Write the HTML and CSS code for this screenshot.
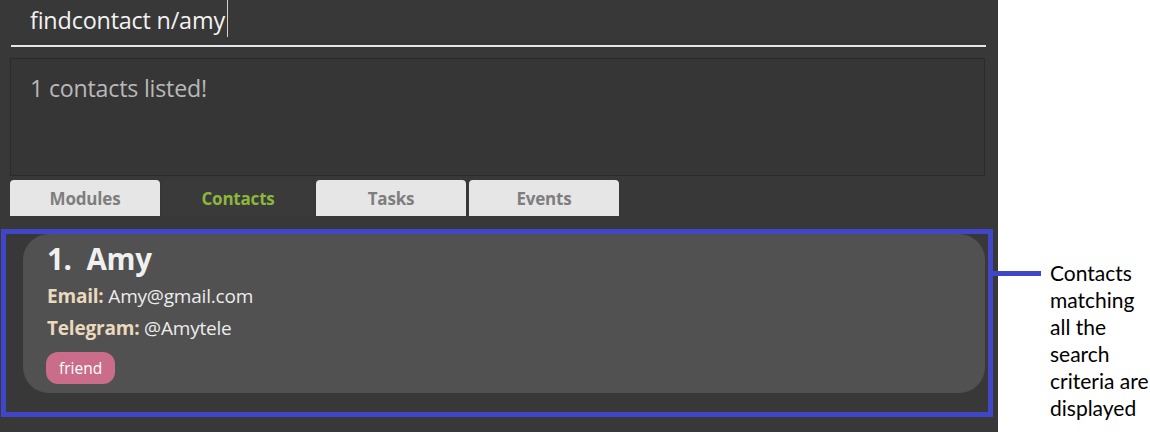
FILE: index.html
```html
<!DOCTYPE html>
<html lang="en">
<head>
<meta charset="utf-8">
<title>Find contact</title>
<link rel="stylesheet" href="styles.css">
</head>
<body>
<div class="app">
  <div class="command">
    <span class="command-text">findcontact n/amy</span><span class="caret"></span>
  </div>
  <div class="result">1 contacts listed!</div>
  <div class="tabs">
    <div class="tab">Modules</div>
    <div class="tab tab-active">Contacts</div>
    <div class="tab">Tasks</div>
    <div class="tab">Events</div>
  </div>
  <div class="highlight">
    <div class="card">
      <div class="card-title">1.&nbsp; Amy</div>
      <div class="fields">
        <div class="field"><span class="label">Email:</span> Amy@gmail.com</div>
        <div class="field"><span class="label">Telegram:</span> @Amytele</div>
      </div>
      <div class="tags"><span class="tag">friend</span></div>
    </div>
  </div>
</div>
<div class="note">
  <div class="note-line"></div>
  <div class="note-text">Contacts matching all the search criteria are displayed</div>
</div>
</body>
</html>
```
FILE: styles.css
```css
html, body {
  margin: 0;
  padding: 0;
  background: #ffffff;
}
body {
  display: flex;
  align-items: flex-start;
  width: 1150px;
  height: 432px;
  overflow: hidden;
  font-family: "Open Sans", "Noto Sans", sans-serif;
}
.app {
  width: 998px;
  height: 432px;
  flex: none;
  background: #383838;
  display: flex;
  flex-direction: column;
}
.command {
  height: 45px;
  margin: 0 12px 0 11px;
  border-bottom: 2px solid #e6e6e6;
  padding-left: 19px;
  display: flex;
  align-items: flex-start;
  box-sizing: content-box;
}
.command-text {
  font-size: 23.4px;
  line-height: 40px;
  color: #f2f2f2;
  letter-spacing: -0.2px;
}
.caret {
  width: 1px;
  height: 37px;
  background: #d0d0d0;
  margin-left: 2px;
}
.result {
  margin: 11px 0 0 10px;
  width: 954px;
  height: 116px;
  border: 1px solid #2b2b2b;
  background: #363636;
  padding: 0 0 0 19px;
  font-size: 23.2px;
  line-height: 59px;
  color: #b9b9b9;
  letter-spacing: -0.2px;
}
.tabs {
  display: flex;
  gap: 3px;
  margin: 4px 0 0 10px;
}
.tab {
  width: 150px;
  height: 36px;
  border-radius: 4px 4px 0 0;
  background: #e6e6e6;
  color: #7e7e7e;
  font-weight: 700;
  font-size: 17px;
  display: flex;
  align-items: center;
  justify-content: center;
  letter-spacing: -0.2px;
}
.tab-active {
  background: #3a3a3a;
  color: #8cb63c;
}
.highlight {
  margin: 13px 0 0 1px;
  width: 982px;
  height: 178px;
  border: 5px solid #4046c8;
  padding: 0;
}
.card {
  margin-left: 17px;
  width: 938px;
  height: 159px;
  padding-left: 24px;
  border-radius: 26px;
  background: #515151;
  color: #efefef;
}
.card-title {
  font-size: 29.5px;
  font-weight: 700;
  line-height: 38px;
  padding-top: 6px;
  letter-spacing: -0.3px;
  color: #f0f0f0;
}
.fields {
  margin-top: 2px;
}
.field {
  font-size: 19px;
  line-height: 32px;
  color: #ececec;
  letter-spacing: -0.2px;
}
.label {
  font-weight: 700;
  color: #ead9bd;
}
.tags {
  margin-top: 8px;
  display: flex;
}
.tag {
  background: #c96d8a;
  color: #ffffff;
  font-size: 15.5px;
  height: 32px;
  line-height: 32px;
  padding: 0 13px;
  border-radius: 12px;
  margin-left: -1px;
}
.note {
  display: flex;
  align-items: flex-start;
  margin: 271px 0 0 -5px;
}
.note-line {
  width: 48px;
  height: 5px;
  background: #4046c8;
  flex: none;
}
.note-text {
  margin: -12px 0 0 9px;
  width: 102px;
  font-family: "Lato", "Open Sans", sans-serif;
  font-size: 21px;
  line-height: 27px;
  color: #000000;
}
```
